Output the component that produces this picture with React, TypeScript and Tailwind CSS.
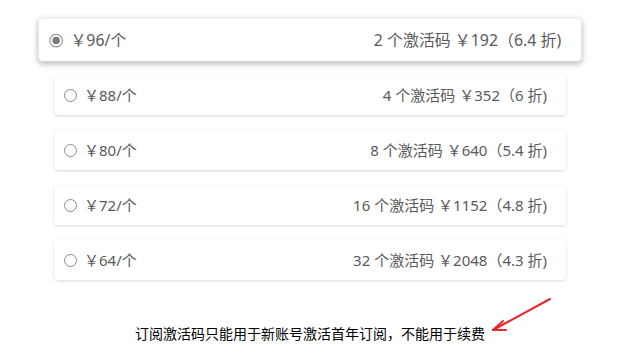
interface Plan {
  price: number;
  count: number;
  total: number;
  discount: string;
}

const plans: Plan[] = [
  { price: 96, count: 2, total: 192, discount: '6.4' },
  { price: 88, count: 4, total: 352, discount: '6' },
  { price: 80, count: 8, total: 640, discount: '5.4' },
  { price: 72, count: 16, total: 1152, discount: '4.8' },
  { price: 64, count: 32, total: 2048, discount: '4.3' },
];

function Radio({ checked }: { checked: boolean }) {
  return (
    <span className="w-[13px] h-[13px] rounded-full border border-[#8a8a8a] flex items-center justify-center bg-white shrink-0">
      {checked && <span className="w-[7px] h-[7px] rounded-full bg-[#7a7a7a]" />}
    </span>
  );
}

export default function App() {
  return (
    <div
      className="relative w-[638px] h-[353px] bg-white overflow-hidden"
      style={{ fontFamily: '"Noto Sans", "Noto Sans CJK SC", sans-serif' }}
    >
      {/* Plan list */}
      <div className="flex flex-col gap-[15px] pt-[20px] ml-[54px] w-[512px]">
        {plans.map((plan, index) => {
          const selected = index === 0;
          return (
            <div
              key={plan.price}
              className={`h-[40px] flex items-center justify-between pl-[10px] pr-[19px] rounded bg-white text-[15px] text-[#5a5a5a] ${
                selected
                  ? 'scale-[1.06] shadow-[0_2px_6px_rgba(0,0,0,0.28)]'
                  : 'shadow-[0_1px_3px_rgba(0,0,0,0.16)]'
              }`}
            >
              <div className="flex items-center gap-[7px]">
                <Radio checked={selected} />
                <span>￥{plan.price}/个</span>
              </div>
              <span>
                {plan.count} 个激活码 ￥{plan.total}（{plan.discount} 折)
              </span>
            </div>
          );
        })}
      </div>

      {/* Note */}
      <p
        className="mt-[44px] ml-[135px] text-[14px] text-black leading-[18px]"
        style={{ fontFamily: '"Noto Sans CJK SC", sans-serif' }}
      >
        订阅激活码只能用于新账号激活首年订阅，不能用于续费
      </p>

      {/* Arrow */}
      <svg className="absolute left-0 top-0" width="638" height="353" fill="none">
        <path d="M550 299 L493 330" stroke="#e8262b" strokeWidth="2" strokeLinecap="round" />
        <path d="M493 330 L503 321 M493 330 L506 330" stroke="#e8262b" strokeWidth="2" strokeLinecap="round" />
      </svg>
    </div>
  );
}
